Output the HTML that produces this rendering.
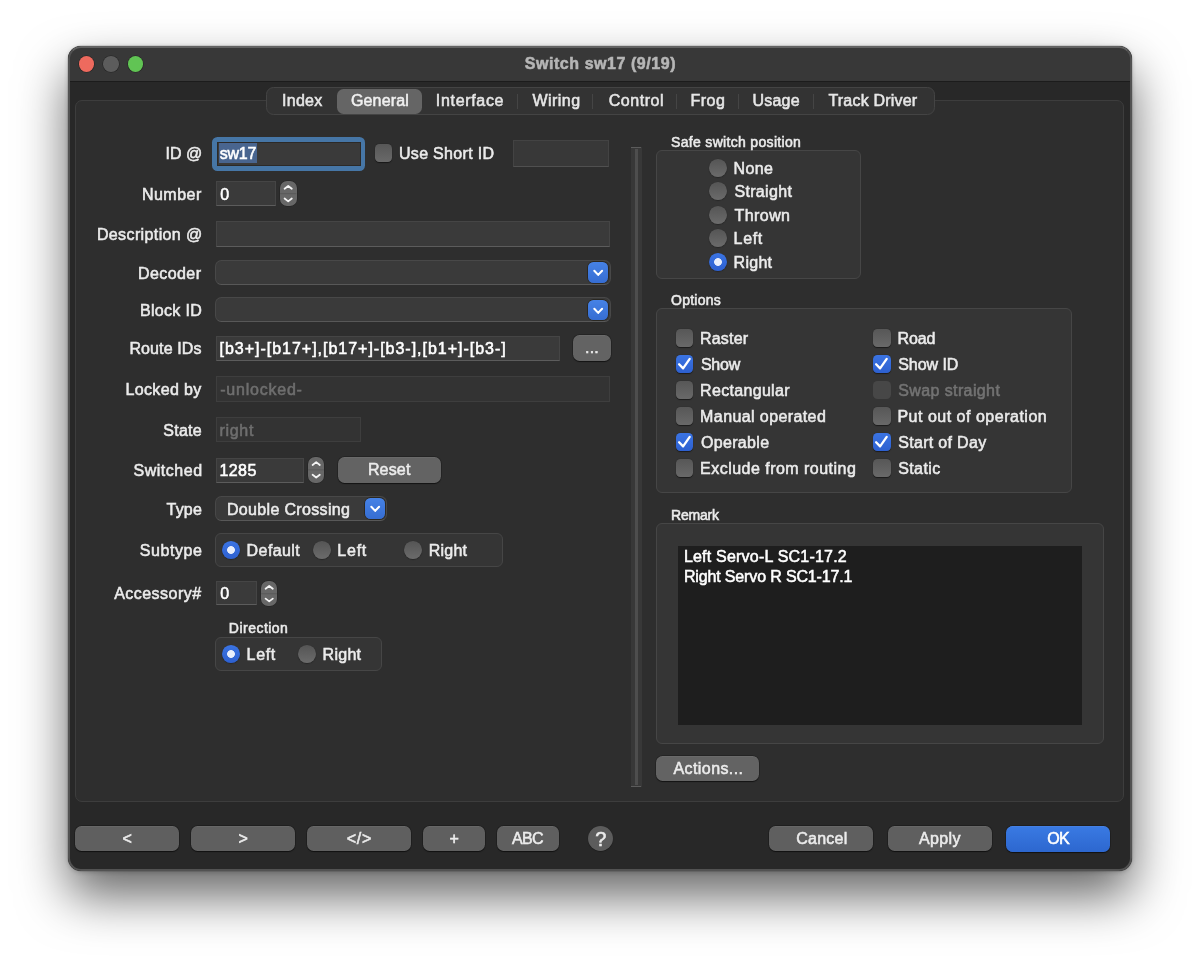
<!DOCTYPE html>
<html><head><meta charset="utf-8"><title>Switch sw17 (9/19)</title>
<style>
html,body{margin:0;padding:0;background:#fff;}
body{width:1200px;height:961px;position:relative;overflow:hidden;font-family:"Liberation Sans",sans-serif;font-size:16px;color:#ebebeb;}
*{box-sizing:border-box;}
.a{position:absolute;}
.t{position:absolute;white-space:pre;line-height:20px;height:20px;-webkit-text-stroke:0.55px currentColor;}
#win{left:68px;top:46px;width:1064px;height:824.5px;border-radius:13px;background:#282828;
 box-shadow:0 0 0 0.5px rgba(0,0,0,.2),0 25px 50px rgba(0,0,0,.6),0 1px 5px rgba(0,0,0,.2);overflow:hidden;}
#win:after{content:"";position:absolute;left:0;top:0;right:0;bottom:0;border-radius:13px;border:2px solid #525252;border-top-color:#626262;pointer-events:none;}
#tb{left:0;top:0;width:1064px;height:35.5px;background:#383838;border-bottom:1.5px solid #1c1c1c;}
.tl{width:15.6px;height:15.6px;border-radius:50%;top:56.4px;box-shadow:0 0 0 0.6px rgba(0,0,0,.35);}
#panel{left:74.8px;top:100px;width:1049.5px;height:701.8px;border:1px solid #3d3d3d;border-radius:7px;background:#2e2e2e;}
#tabs{left:266px;top:87.2px;width:668.5px;height:27.5px;border-radius:7.5px;background:#333333;border:1px solid #444;}
#tabsel{left:336.5px;top:88.5px;width:85.6px;height:25px;border-radius:6.5px;background:#656565;}
.sep{background:#454545;}
.f{background:#3a3a3a;border:1px solid #454545;border-bottom-color:#5c5c5c;}
.fd{background:#333;border:1px solid #3e3e3e;}
.cb{background:#3a3a3a;border:1px solid #484848;border-bottom-color:#585858;border-radius:6.5px;}
.bl{border-radius:5.5px;background:linear-gradient(#4682e6,#366dd2);box-shadow:0 0 0 0.7px rgba(20,15,0,.55);}
.btn{background:#636363;border-radius:6.5px;box-shadow:0 0 0 0.5px rgba(0,0,0,.3),0 0.5px 1px rgba(0,0,0,.5),inset 0 0.6px 0 rgba(255,255,255,.10);}
.gb{background:#353535;border:1px solid #464646;border-radius:6px;}
.st{border-radius:7px;background:#676767;overflow:hidden;box-shadow:0 0 0 0.5px rgba(0,0,0,.3);}
.ck{border-radius:4.5px;background:linear-gradient(#575757,#696969);box-shadow:0 0.5px 1px rgba(0,0,0,.5);}
.ck.on{background:linear-gradient(#3b74e3,#2d60d0);}
.ck.dis{background:#474747;box-shadow:none;}
.rd{border-radius:50%;background:linear-gradient(#555,#6b6b6b);box-shadow:0 0.5px 1px rgba(0,0,0,.5);}
.rd.on{background:radial-gradient(circle at 50% 50%,#e9effc 0,#e9effc 3.5px,rgba(233,239,252,0) 4.3px),linear-gradient(#3b74e3,#2d60d0);}
svg{position:absolute;overflow:visible;}

#root{left:0;top:0;width:1200px;height:961px;will-change:transform;}

</style></head><body><div id="root" class="a">
<div id="win" class="a"><div id="tb" class="a"></div></div>
<div class="a tl" style="left:78.5px;background:#ee6a5e;"></div>
<div class="a tl" style="left:103px;background:#5c5c5c;"></div>
<div class="a tl" style="left:127.9px;background:#61c454;"></div>
<div id="panel" class="a"></div>
<div id="tabs" class="a"></div>
<div id="tabsel" class="a"></div>
<div class="a sep" style="left:516.8px;top:93.5px;width:1.00px;height:15.00px;"></div>
<div class="a sep" style="left:591.5px;top:93.5px;width:1.00px;height:15.00px;"></div>
<div class="a sep" style="left:676.0px;top:93.5px;width:1.00px;height:15.00px;"></div>
<div class="a sep" style="left:738.4px;top:93.5px;width:1.00px;height:15.00px;"></div>
<div class="a sep" style="left:812.6px;top:93.5px;width:1.00px;height:15.00px;"></div>
<div class="a " style="left:212.25px;top:136.75px;width:152.75px;height:34.00px;border-radius:5.5px;background:#4676a6;"></div>
<div class="a " style="left:216.6px;top:141.6px;width:144.40px;height:24.00px;background:#3a3a3a;border:1px solid #2c2a28;"></div>
<div class="a " style="left:219.25px;top:143.25px;width:37.75px;height:19.65px;background:#49658f;"></div>
<div class="a ck" style="left:374.7px;top:144.25px;width:17.50px;height:17.50px;"></div>
<div class="a fd" style="left:512.8px;top:140.3px;width:96.70px;height:26.30px;background:#383838;border-color:#434343;border-bottom-color:#505050;"></div>
<div class="a f" style="left:215.8px;top:181.2px;width:60.40px;height:24.60px;"></div>
<div class="a st" style="left:280.4px;top:181px;width:16.40px;height:25.30px;"><svg width="16.40" height="25.30" viewBox="0 0 16.40 25.30" style="left:0;top:0"><path d="M4.60 7.75 L8.20 4.95 L11.80 7.75" fill="none" stroke="#f4f4f4" stroke-width="1.8" stroke-linecap="round" stroke-linejoin="round"/><path d="M4.60 17.55 L8.20 20.35 L11.80 17.55" fill="none" stroke="#f4f4f4" stroke-width="1.8" stroke-linecap="round" stroke-linejoin="round"/><rect x="0" y="12.15" width="16.40" height="1" fill="#5a5a5a"/></svg></div>
<div class="a f" style="left:216px;top:221px;width:393.50px;height:25.50px;"></div>
<div class="a cb" style="left:214.7px;top:260.1px;width:395.90px;height:25.00px;"></div>
<div class="a bl" style="left:588px;top:262.4px;width:20.10px;height:20.60px;"><svg width="20.1" height="20.6" viewBox="0 0 20.1 20.6" style="left:0;top:0"><path d="M6.3 8.8 L10.2 12.9 L14.1 8.8" fill="none" stroke="#fff" stroke-width="2.05" stroke-linecap="round" stroke-linejoin="round"/></svg></div>
<div class="a cb" style="left:214.7px;top:297.3px;width:395.90px;height:25.00px;"></div>
<div class="a bl" style="left:588px;top:299.6px;width:20.10px;height:20.60px;"><svg width="20.1" height="20.6" viewBox="0 0 20.1 20.6" style="left:0;top:0"><path d="M6.3 8.8 L10.2 12.9 L14.1 8.8" fill="none" stroke="#fff" stroke-width="2.05" stroke-linecap="round" stroke-linejoin="round"/></svg></div>
<div class="a f" style="left:216px;top:335.5px;width:344.00px;height:25.50px;"></div>
<div class="a btn" style="left:573.4px;top:335.2px;width:37.30px;height:25.40px;"></div>
<div class="a fd" style="left:216px;top:376.3px;width:393.50px;height:25.40px;"></div>
<div class="a fd" style="left:216px;top:417.2px;width:145.30px;height:25.30px;"></div>
<div class="a f" style="left:216px;top:457.5px;width:87.70px;height:25.00px;"></div>
<div class="a st" style="left:307.8px;top:457.2px;width:16.40px;height:25.70px;"><svg width="16.40" height="25.70" viewBox="0 0 16.40 25.70" style="left:0;top:0"><path d="M4.60 7.95 L8.20 5.15 L11.80 7.95" fill="none" stroke="#f4f4f4" stroke-width="1.8" stroke-linecap="round" stroke-linejoin="round"/><path d="M4.60 17.75 L8.20 20.55 L11.80 17.75" fill="none" stroke="#f4f4f4" stroke-width="1.8" stroke-linecap="round" stroke-linejoin="round"/><rect x="0" y="12.35" width="16.40" height="1" fill="#5a5a5a"/></svg></div>
<div class="a btn" style="left:337.8px;top:457px;width:103.70px;height:25.80px;"></div>
<div class="a cb" style="left:214.7px;top:496.1px;width:172.60px;height:25.00px;"></div>
<div class="a bl" style="left:365px;top:498.4px;width:20.10px;height:20.60px;"><svg width="20.1" height="20.6" viewBox="0 0 20.1 20.6" style="left:0;top:0"><path d="M6.3 8.8 L10.2 12.9 L14.1 8.8" fill="none" stroke="#fff" stroke-width="2.05" stroke-linecap="round" stroke-linejoin="round"/></svg></div>
<div class="a gb" style="left:214.7px;top:532.8px;width:288.50px;height:34.70px;"></div>
<div class="a rd on" style="left:221.75px;top:541.15px;width:17.90px;height:17.90px;"></div>
<div class="a rd" style="left:312.95px;top:541.15px;width:17.90px;height:17.90px;"></div>
<div class="a rd" style="left:404.35px;top:541.15px;width:17.90px;height:17.90px;"></div>
<div class="a f" style="left:216px;top:581.3px;width:40.50px;height:24.20px;"></div>
<div class="a st" style="left:260.6px;top:580.6px;width:16.40px;height:25.40px;"><svg width="16.40" height="25.40" viewBox="0 0 16.40 25.40" style="left:0;top:0"><path d="M4.60 7.80 L8.20 5.00 L11.80 7.80" fill="none" stroke="#f4f4f4" stroke-width="1.8" stroke-linecap="round" stroke-linejoin="round"/><path d="M4.60 17.60 L8.20 20.40 L11.80 17.60" fill="none" stroke="#f4f4f4" stroke-width="1.8" stroke-linecap="round" stroke-linejoin="round"/><rect x="0" y="12.20" width="16.40" height="1" fill="#5a5a5a"/></svg></div>
<div class="a gb" style="left:214.7px;top:636.8px;width:167.40px;height:33.90px;"></div>
<div class="a rd on" style="left:221.75px;top:644.9499999999999px;width:17.90px;height:17.90px;"></div>
<div class="a rd" style="left:297.75px;top:644.9499999999999px;width:17.90px;height:17.90px;"></div>
<div class="a " style="left:630.8px;top:147px;width:10.80px;height:640.00px;background:#383838;"></div>
<div class="a " style="left:635.2px;top:149px;width:2.60px;height:636.00px;background:#4e4e4e;"></div>
<div class="a " style="left:631.2px;top:147px;width:10.00px;height:1.30px;background:#5c5c5c;"></div>
<div class="a " style="left:631.2px;top:785.7px;width:10.00px;height:1.30px;background:#5c5c5c;"></div>
<div class="a gb" style="left:656.3px;top:150.4px;width:204.50px;height:128.30px;"></div>
<div class="a rd" style="left:708.75px;top:159.05px;width:17.90px;height:17.90px;"></div>
<div class="a rd" style="left:708.75px;top:182.45000000000002px;width:17.90px;height:17.90px;"></div>
<div class="a rd" style="left:708.75px;top:205.85000000000002px;width:17.90px;height:17.90px;"></div>
<div class="a rd" style="left:708.75px;top:229.25px;width:17.90px;height:17.90px;"></div>
<div class="a rd on" style="left:708.75px;top:252.65000000000003px;width:17.90px;height:17.90px;"></div>
<div class="a gb" style="left:656px;top:308px;width:416.00px;height:185.00px;"></div>
<div class="a ck" style="left:675.8px;top:329.25px;width:17.50px;height:17.50px;"></div>
<div class="a ck" style="left:873.1px;top:329.25px;width:17.50px;height:17.50px;"></div>
<div class="a ck on" style="left:675.8px;top:355.25px;width:17.50px;height:17.50px;"><svg width="17.5" height="17.5" viewBox="0 0 17.5 17.5" style="left:0;top:0"><path d="M3.1 9.3 L7.1 13.4 L13.7 3.9" fill="none" stroke="#fff" stroke-width="2.3" stroke-linecap="round" stroke-linejoin="round"/></svg></div>
<div class="a ck on" style="left:873.1px;top:355.25px;width:17.50px;height:17.50px;"><svg width="17.5" height="17.5" viewBox="0 0 17.5 17.5" style="left:0;top:0"><path d="M3.1 9.3 L7.1 13.4 L13.7 3.9" fill="none" stroke="#fff" stroke-width="2.3" stroke-linecap="round" stroke-linejoin="round"/></svg></div>
<div class="a ck" style="left:675.8px;top:381.25px;width:17.50px;height:17.50px;"></div>
<div class="a ck dis" style="left:873.1px;top:381.25px;width:17.50px;height:17.50px;"></div>
<div class="a ck" style="left:675.8px;top:407.25px;width:17.50px;height:17.50px;"></div>
<div class="a ck" style="left:873.1px;top:407.25px;width:17.50px;height:17.50px;"></div>
<div class="a ck on" style="left:675.8px;top:433.25px;width:17.50px;height:17.50px;"><svg width="17.5" height="17.5" viewBox="0 0 17.5 17.5" style="left:0;top:0"><path d="M3.1 9.3 L7.1 13.4 L13.7 3.9" fill="none" stroke="#fff" stroke-width="2.3" stroke-linecap="round" stroke-linejoin="round"/></svg></div>
<div class="a ck on" style="left:873.1px;top:433.25px;width:17.50px;height:17.50px;"><svg width="17.5" height="17.5" viewBox="0 0 17.5 17.5" style="left:0;top:0"><path d="M3.1 9.3 L7.1 13.4 L13.7 3.9" fill="none" stroke="#fff" stroke-width="2.3" stroke-linecap="round" stroke-linejoin="round"/></svg></div>
<div class="a ck" style="left:675.8px;top:459.25px;width:17.50px;height:17.50px;"></div>
<div class="a ck" style="left:873.1px;top:459.25px;width:17.50px;height:17.50px;"></div>
<div class="a gb" style="left:656.3px;top:523.2px;width:447.40px;height:220.50px;"></div>
<div class="a " style="left:678.2px;top:545.5px;width:403.80px;height:179.50px;background:#1e1e1e;"></div>
<div class="a btn" style="left:656.2px;top:756.2px;width:103.30px;height:24.50px;"></div>
<div class="a btn" style="left:75px;top:826px;width:104.00px;height:25.30px;background:#5f5f5f;"></div>
<div class="a btn" style="left:191px;top:826px;width:104.00px;height:25.30px;background:#5f5f5f;"></div>
<div class="a btn" style="left:307px;top:826px;width:104.00px;height:25.30px;background:#5f5f5f;"></div>
<div class="a btn" style="left:423px;top:826px;width:62.00px;height:25.30px;background:#5f5f5f;"></div>
<div class="a btn" style="left:497px;top:826px;width:62.00px;height:25.30px;background:#5f5f5f;"></div>
<div class="a btn" style="left:769.4px;top:826px;width:103.60px;height:25.30px;background:#5f5f5f;"></div>
<div class="a btn" style="left:888px;top:826px;width:103.50px;height:25.30px;background:#5f5f5f;"></div>
<div class="a btn" style="left:1006px;top:826px;width:104.20px;height:25.60px;background:linear-gradient(#3a7ae3,#2d67cf);"></div>
<div class="a " style="left:587.7px;top:825.7px;width:25.00px;height:25.00px;border-radius:50%;background:#5c5c5c;box-shadow:0 0.5px 1px rgba(0,0,0,.5);"></div>
<div class="t" style="left:524.79px;top:54.00px;letter-spacing:0.550px;color:#b6b6b6;font-weight:bold;">Switch sw17 (9/19)</div>
<div class="t" style="left:282.01px;top:91.00px;letter-spacing:0.291px;color:#e6e6e6;">Index</div>
<div class="t" style="left:350.96px;top:91.00px;letter-spacing:0.156px;color:#f0f0f0;">General</div>
<div class="t" style="left:435.81px;top:91.00px;letter-spacing:0.682px;color:#e6e6e6;">Interface</div>
<div class="t" style="left:532.49px;top:91.00px;letter-spacing:0.460px;color:#e6e6e6;">Wiring</div>
<div class="t" style="left:608.76px;top:91.00px;letter-spacing:0.548px;color:#e6e6e6;">Control</div>
<div class="t" style="left:690.60px;top:91.00px;letter-spacing:0.459px;color:#e6e6e6;">Frog</div>
<div class="t" style="left:752.46px;top:91.00px;letter-spacing:0.228px;color:#e6e6e6;">Usage</div>
<div class="t" style="left:828.49px;top:91.00px;letter-spacing:0.191px;color:#e6e6e6;">Track Driver</div>
<div class="t" style="left:165.51px;top:144.00px;">ID @</div>
<div class="t" style="left:141.90px;top:185.00px;letter-spacing:0.501px;">Number</div>
<div class="t" style="left:96.90px;top:225.00px;letter-spacing:0.383px;">Description @</div>
<div class="t" style="left:138.10px;top:264.00px;letter-spacing:0.399px;">Decoder</div>
<div class="t" style="left:139.90px;top:301.00px;letter-spacing:0.336px;">Block ID</div>
<div class="t" style="left:129.40px;top:339.00px;letter-spacing:0.117px;">Route IDs</div>
<div class="t" style="left:125.60px;top:380.00px;letter-spacing:0.327px;">Locked by</div>
<div class="t" style="left:163.25px;top:421.00px;letter-spacing:0.270px;">State</div>
<div class="t" style="left:133.45px;top:461.00px;letter-spacing:0.534px;">Switched</div>
<div class="t" style="left:166.59px;top:500.00px;letter-spacing:0.178px;">Type</div>
<div class="t" style="left:139.75px;top:541.00px;letter-spacing:0.562px;">Subtype</div>
<div class="t" style="left:114.19px;top:584.00px;letter-spacing:0.464px;">Accessory#</div>
<div class="t" style="left:219.79px;top:144.00px;letter-spacing:-0.239px;color:#fff;">sw17</div>
<div class="t" style="left:398.96px;top:144.00px;letter-spacing:0.317px;">Use Short ID</div>
<div class="t" style="left:220.25px;top:185.00px;color:#fff;">0</div>
<div class="t" style="left:219.52px;top:339.00px;letter-spacing:0.983px;color:#fff;">[b3+]-[b17+],[b17+]-[b3-],[b1+]-[b3-]</div>
<div class="t" style="left:220.26px;top:380.00px;letter-spacing:0.776px;color:#6f6f6f;">-unlocked-</div>
<div class="t" style="left:219.58px;top:421.00px;letter-spacing:0.666px;color:#6f6f6f;">right</div>
<div class="t" style="left:219.46px;top:461.00px;letter-spacing:0.431px;color:#fff;">1285</div>
<div class="t" style="left:367.90px;top:460.00px;letter-spacing:0.175px;color:#ececec;">Reset</div>
<div class="t" style="left:226.90px;top:500.00px;letter-spacing:0.343px;color:#ececec;">Double Crossing</div>
<div class="t" style="left:246.60px;top:541.00px;letter-spacing:0.416px;">Default</div>
<div class="t" style="left:337.30px;top:541.00px;letter-spacing:0.766px;">Left</div>
<div class="t" style="left:428.70px;top:541.00px;letter-spacing:0.249px;">Right</div>
<div class="t" style="left:220.25px;top:584.00px;color:#fff;">0</div>
<div class="t" style="left:228.82px;top:618.00px;letter-spacing:0.482px;font-size:14px;">Direction</div>
<div class="t" style="left:246.60px;top:645.00px;letter-spacing:0.666px;">Left</div>
<div class="t" style="left:322.60px;top:645.00px;letter-spacing:0.274px;">Right</div>
<div class="t" style="left:585.12px;top:338.00px;letter-spacing:0.165px;color:#ececec;">...</div>
<div class="t" style="left:671.06px;top:132.00px;letter-spacing:0.321px;font-size:14px;">Safe switch position</div>
<div class="t" style="left:733.60px;top:159.00px;letter-spacing:0.359px;">None</div>
<div class="t" style="left:734.45px;top:182.00px;letter-spacing:0.327px;">Straight</div>
<div class="t" style="left:734.59px;top:206.00px;letter-spacing:0.418px;">Thrown</div>
<div class="t" style="left:733.60px;top:229.00px;letter-spacing:0.666px;">Left</div>
<div class="t" style="left:733.60px;top:253.00px;letter-spacing:0.274px;">Right</div>
<div class="t" style="left:671.08px;top:290.00px;letter-spacing:0.238px;font-size:14px;">Options</div>
<div class="t" style="left:700.10px;top:329.00px;letter-spacing:0.164px;">Raster</div>
<div class="t" style="left:700.95px;top:355.00px;letter-spacing:-0.235px;">Show</div>
<div class="t" style="left:700.10px;top:381.00px;letter-spacing:0.315px;">Rectangular</div>
<div class="t" style="left:700.10px;top:407.00px;letter-spacing:0.403px;">Manual operated</div>
<div class="t" style="left:700.96px;top:433.00px;letter-spacing:0.325px;">Operable</div>
<div class="t" style="left:700.10px;top:459.00px;letter-spacing:0.472px;">Exclude from routing</div>
<div class="t" style="left:897.40px;top:329.00px;letter-spacing:-0.051px;">Road</div>
<div class="t" style="left:898.25px;top:355.00px;letter-spacing:-0.051px;">Show ID</div>
<div class="t" style="left:898.25px;top:381.00px;letter-spacing:0.389px;color:#737373;">Swap straight</div>
<div class="t" style="left:897.40px;top:407.00px;letter-spacing:0.509px;">Put out of operation</div>
<div class="t" style="left:898.25px;top:433.00px;letter-spacing:0.312px;">Start of Day</div>
<div class="t" style="left:898.25px;top:459.00px;letter-spacing:0.376px;">Static</div>
<div class="t" style="left:671.02px;top:505.00px;letter-spacing:-0.216px;font-size:14px;">Remark</div>
<div class="t" style="left:683.90px;top:547.00px;letter-spacing:0.210px;color:#fff;">Left Servo-L SC1-17.2</div>
<div class="t" style="left:683.90px;top:567.00px;letter-spacing:-0.144px;color:#fff;">Right Servo R SC1-17.1</div>
<div class="t" style="left:673.49px;top:759.00px;letter-spacing:0.416px;color:#ececec;">Actions...</div>
<div class="t" style="left:122.43px;top:829.00px;color:#ececec;">&lt;</div>
<div class="t" style="left:238.43px;top:829.00px;color:#ececec;">&gt;</div>
<div class="t" style="left:346.76px;top:829.00px;letter-spacing:0.717px;color:#ececec;">&lt;/&gt;</div>
<div class="t" style="left:449.43px;top:829.00px;color:#ececec;">+</div>
<div class="t" style="left:511.99px;top:829.00px;letter-spacing:-0.624px;color:#ececec;">ABC</div>
<div class="t" style="left:595.22px;top:829.00px;font-size:20px;color:#ececec;">?</div>
<div class="t" style="left:796.26px;top:829.00px;letter-spacing:0.247px;color:#ececec;">Cancel</div>
<div class="t" style="left:918.99px;top:829.00px;letter-spacing:0.355px;color:#ececec;">Apply</div>
<div class="t" style="left:1047.22px;top:829.00px;letter-spacing:-0.700px;color:#fff;">OK</div>
</div></body></html>
